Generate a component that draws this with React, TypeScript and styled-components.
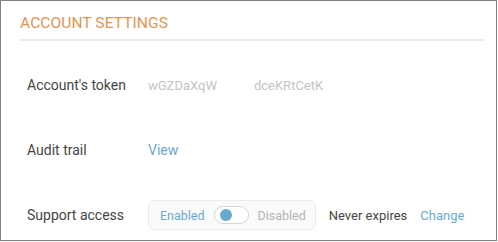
import React from 'react'
import styled, { createGlobalStyle } from 'styled-components'

const GlobalStyle = createGlobalStyle`
    html, body {
        margin: 0;
        padding: 0;
        background: #fff;
    }
    body {
        font-family: Roboto, "Liberation Sans", sans-serif;
    }
`

const Frame = styled.div`
    box-sizing: border-box;
    width: 497px;
    height: 241px;
    border: 1px solid #808080;
    padding: 13px 11px 0 19px;
    overflow: hidden;
`

const Title = styled.h2`
    margin: 0;
    font-size: 15.5px;
    font-weight: 400;
    color: #e0954f;
    padding-bottom: 7px;
    border-bottom: 2px solid #ebebeb;
    letter-spacing: 0.1px;
`

const Rows = styled.div`
    display: flex;
    flex-direction: column;
    gap: 17px;
    padding: 20px 0 0 7px;
`

const Row = styled.div`
    display: flex;
    align-items: center;
    height: 48px;
`

const Label = styled.div`
    width: 121px;
    font-size: 14px;
    color: #454545;
`

const Token = styled.div`
    display: flex;
    font-size: 13px;
    color: #c4c4c4;
`

const TokenPart = styled.span<{ $gap: number }>`
    margin-right: ${(p) => p.$gap}px;
`

const Link = styled.a<{ $size?: number }>`
    font-size: ${(p) => p.$size ?? 14}px;
    color: #6aa9cf;
    text-decoration: none;
    cursor: pointer;
`

const ToggleGroup = styled.div`
    display: flex;
    align-items: center;
    box-sizing: border-box;
    height: 30px;
    padding: 0 9px 0 11px;
    background: #fafafa;
    border: 1px solid #ececec;
    border-radius: 7px;
    font-size: 12.5px;
`

const ToggleText = styled.span<{ $active?: boolean }>`
    color: ${(p) => (p.$active ? '#6aa9cf' : '#b5b5b5')};
`

const Switch = styled.div`
    position: relative;
    box-sizing: border-box;
    width: 35px;
    height: 18px;
    margin: 0 9px;
    background: #fff;
    border: 1px solid #d6d6d6;
    border-radius: 9px;
`

const Knob = styled.div`
    position: absolute;
    top: 2px;
    left: 5px;
    width: 12px;
    height: 12px;
    border-radius: 50%;
    background: #6aa9cf;
`

const Expiry = styled.span`
    margin-left: 13px;
    font-size: 13px;
    color: #454545;
    white-space: nowrap;
`

const ChangeLink = styled(Link)`
    margin-left: 13px;
`

const App = () => {
    return (
        <>
            <GlobalStyle />
            <Frame>
                <Title>ACCOUNT SETTINGS</Title>
                <Rows>
                    <Row>
                        <Label>Account's token</Label>
                        <Token>
                            <TokenPart $gap={37}>wGZDaXqW</TokenPart>
                            <TokenPart $gap={0}>dceKRtCetK</TokenPart>
                        </Token>
                    </Row>
                    <Row>
                        <Label>Audit trail</Label>
                        <Link>View</Link>
                    </Row>
                    <Row>
                        <Label>Support access</Label>
                        <ToggleGroup>
                            <ToggleText $active>Enabled</ToggleText>
                            <Switch>
                                <Knob />
                            </Switch>
                            <ToggleText>Disabled</ToggleText>
                        </ToggleGroup>
                        <Expiry>Never expires</Expiry>
                        <ChangeLink $size={13}>Change</ChangeLink>
                    </Row>
                </Rows>
            </Frame>
        </>
    )
}

export default App
